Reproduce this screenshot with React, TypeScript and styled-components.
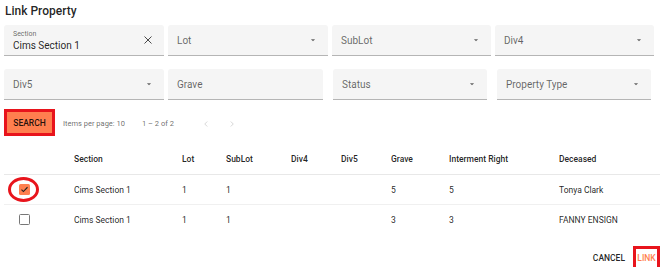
import styled, { createGlobalStyle } from 'styled-components';

interface PropertyRow {
    id: string;
    section: string;
    lot: string;
    subLot: string;
    div4: string;
    div5: string;
    grave: string;
    intermentRight: string;
    deceased: string;
    checked: boolean;
}

const rows: PropertyRow[] = [
    {
        id: 'r1',
        section: 'Cims Section 1',
        lot: '1',
        subLot: '1',
        div4: '',
        div5: '',
        grave: '5',
        intermentRight: '5',
        deceased: 'Tonya Clark',
        checked: true,
    },
    {
        id: 'r2',
        section: 'Cims Section 1',
        lot: '1',
        subLot: '1',
        div4: '',
        div5: '',
        grave: '3',
        intermentRight: '3',
        deceased: 'FANNY ENSIGN',
        checked: false,
    },
];

// column widths shared by header and body rows
const COLUMNS = '70px 108px 44px 65px 50px 50px 58px 110px 1fr';

const Caret = () => (
    <svg width="10" height="10" viewBox="0 0 24 24">
        <path d="M7 10l5 5 5-5z" fill="rgba(0,0,0,0.6)" />
    </svg>
);

const Chevron = ({ dir }: { dir: 'left' | 'right' }) => (
    <svg width="10" height="10" viewBox="0 0 24 24">
        <path
            d={dir === 'left' ? 'M15 6l-6 6 6 6' : 'M9 6l6 6-6 6'}
            fill="none"
            stroke="#cfcfcf"
            strokeWidth="2"
        />
    </svg>
);

function App() {
    return (
        <Page>
            <GlobalStyle />
            <Title>Link Property</Title>

            <FieldRow>
                <Field width={160}>
                    <FieldValue>
                        <FieldLabel>Section</FieldLabel>
                        <FieldText>Cims Section 1</FieldText>
                    </FieldValue>
                    <svg width="12" height="12" viewBox="0 0 24 24">
                        <path
                            d="M5 5l14 14M19 5L5 19"
                            stroke="rgba(0,0,0,0.7)"
                            strokeWidth="2"
                            fill="none"
                        />
                    </svg>
                </Field>
                <Field width={160}>
                    <Placeholder>Lot</Placeholder>
                    <Caret />
                </Field>
                <Field width={159}>
                    <Placeholder>SubLot</Placeholder>
                    <Caret />
                </Field>
                <Field width={159}>
                    <Placeholder>Div4</Placeholder>
                    <Caret />
                </Field>
            </FieldRow>

            <FieldRow second>
                <Field width={160}>
                    <Placeholder>Div5</Placeholder>
                    <Caret />
                </Field>
                <Field width={155} gapAfter={10}>
                    <Placeholder>Grave</Placeholder>
                </Field>
                <Field width={154} gapAfter={10}>
                    <Placeholder>Status</Placeholder>
                    <Caret />
                </Field>
                <Field width={154}>
                    <Placeholder>Property Type</Placeholder>
                    <Caret />
                </Field>
            </FieldRow>

            <Toolbar>
                <Highlight>
                    <SearchButton>SEARCH</SearchButton>
                </Highlight>
                <PagerText>Items per page: 10</PagerText>
                <PagerRange>1 – 2 of 2</PagerRange>
                <PagerNav>
                    <Chevron dir="left" />
                    <Chevron dir="right" />
                </PagerNav>
            </Toolbar>

            <Table>
                <HeaderRow>
                    <span />
                    <span>Section</span>
                    <span>Lot</span>
                    <span>SubLot</span>
                    <span>Div4</span>
                    <span>Div5</span>
                    <span>Grave</span>
                    <span>Interment Right</span>
                    <span>Deceased</span>
                </HeaderRow>
                {rows.map((row) => (
                    <BodyRow key={row.id}>
                        <CheckCell>
                            <Checkbox checked={row.checked}>
                                {row.checked && (
                                    <svg width="9" height="9" viewBox="0 0 24 24">
                                        <path
                                            d="M4 12.5l5 5L20 6"
                                            fill="none"
                                            stroke="#222"
                                            strokeWidth="3"
                                        />
                                    </svg>
                                )}
                            </Checkbox>
                            {row.checked && <Circle />}
                        </CheckCell>
                        <span>{row.section}</span>
                        <span>{row.lot}</span>
                        <span>{row.subLot}</span>
                        <span>{row.div4}</span>
                        <span>{row.div5}</span>
                        <span>{row.grave}</span>
                        <span>{row.intermentRight}</span>
                        <span>{row.deceased}</span>
                    </BodyRow>
                ))}
            </Table>

            <Footer>
                <CancelButton>CANCEL</CancelButton>
                <LinkBox>
                    <LinkButton>LINK</LinkButton>
                </LinkBox>
            </Footer>
        </Page>
    );
}

const GlobalStyle = createGlobalStyle`
    body {
        margin: 0;
        background: #ffffff;
        font-family: Roboto, 'Noto Sans', sans-serif;
        color: rgba(0, 0, 0, 0.87);
    }
`;

const Page = styled.div`
    width: 670px;
    height: 267px;
    padding: 0 10px 0 4px;
    box-sizing: border-box;
    overflow: hidden;
`;

const Title = styled.div`
    height: 25px;
    padding-left: 1px;
    font-size: 12px;
    font-weight: 500;
    line-height: 23px;
    color: rgba(0, 0, 0, 0.87);
`;

const FieldRow = styled.div<{ second?: boolean }>`
    display: flex;
    gap: 4px;
    margin-top: ${({ second }) => (second ? '13px' : '0')};
`;

const Field = styled.div<{ width: number; gapAfter?: number }>`
    flex: 0 0 ${({ width }) => width}px;
    margin-right: ${({ gapAfter }) => (gapAfter ? gapAfter - 4 : 0)}px;
    height: 31px;
    box-sizing: border-box;
    display: flex;
    align-items: center;
    justify-content: space-between;
    padding: 0 10px 0 9px;
    background: #f5f5f5;
    border-bottom: 1px solid #b5b5b5;
    border-radius: 3px 3px 0 0;
`;

const FieldValue = styled.div`
    display: flex;
    flex-direction: column;
    padding-top: 2px;
`;

const FieldLabel = styled.span`
    font-size: 7px;
    line-height: 9px;
    color: rgba(0, 0, 0, 0.6);
`;

const FieldText = styled.span`
    font-size: 10px;
    line-height: 13px;
    color: rgba(0, 0, 0, 0.87);
`;

const Placeholder = styled.span`
    font-size: 10px;
    color: rgba(0, 0, 0, 0.6);
`;

const Toolbar = styled.div`
    display: flex;
    align-items: center;
    margin-top: 9px;
    height: 27px;
`;

const Highlight = styled.div`
    border: 3px solid #e8141c;
    display: flex;
`;

const SearchButton = styled.button`
    width: 45px;
    height: 21px;
    border: none;
    padding: 0;
    background: #ff7f4f;
    font-family: Roboto, sans-serif;
    font-size: 8.5px;
    font-weight: 500;
    color: rgba(0, 0, 0, 0.87);
    cursor: pointer;
`;

const PagerText = styled.span`
    margin-left: 8px;
    font-size: 7.5px;
    color: rgba(0, 0, 0, 0.6);
    padding-top: 2px;
`;

const PagerRange = styled.span`
    margin-left: 17px;
    font-size: 7.5px;
    color: rgba(0, 0, 0, 0.6);
    padding-top: 2px;
`;

const PagerNav = styled.div`
    display: flex;
    gap: 16px;
    margin-left: 27px;
    padding-top: 2px;
`;

const Table = styled.div`
    margin-top: 8px;
`;

const HeaderRow = styled.div`
    display: grid;
    grid-template-columns: ${COLUMNS};
    align-items: center;
    height: 30px;
    border-bottom: 1px solid #e8e8e8;
    font-size: 8.5px;
    font-weight: 500;
    color: rgba(0, 0, 0, 0.87);
`;

const BodyRow = styled.div`
    display: grid;
    grid-template-columns: ${COLUMNS};
    align-items: center;
    height: 29px;
    border-bottom: 1px solid #f0f0f0;
    font-size: 8.5px;
    color: rgba(0, 0, 0, 0.87);

    &:last-child {
        border-bottom: none;
    }
`;

const CheckCell = styled.div`
    position: relative;
    height: 100%;
    display: flex;
    align-items: center;
    padding-left: 15px;
`;

const Checkbox = styled.div<{ checked: boolean }>`
    width: 11px;
    height: 11px;
    box-sizing: border-box;
    border-radius: 1.5px;
    display: flex;
    align-items: center;
    justify-content: center;
    background: ${({ checked }) => (checked ? '#ff7f4f' : '#fff')};
    border: ${({ checked }) => (checked ? 'none' : '1.5px solid #777')};
`;

// red annotation ring around the selected checkbox
const Circle = styled.div`
    position: absolute;
    left: 4px;
    top: 2px;
    width: 31px;
    height: 25px;
    box-sizing: border-box;
    border: 3px solid #e8141c;
    border-radius: 50%;
`;

const Footer = styled.div`
    display: flex;
    justify-content: flex-end;
    align-items: center;
    margin-top: 12px;
    padding-right: 0;
    gap: 8px;
`;

const CancelButton = styled.button`
    border: none;
    background: none;
    padding: 0;
    font-family: Roboto, sans-serif;
    font-size: 8.5px;
    font-weight: 500;
    color: rgba(0, 0, 0, 0.87);
`;

const LinkBox = styled.div`
    border: 3px solid #e8141c;
    width: 27px;
    height: 24px;
    box-sizing: border-box;
    display: flex;
    align-items: center;
    justify-content: center;
`;

const LinkButton = styled.button`
    border: none;
    background: none;
    padding: 0;
    font-family: Roboto, sans-serif;
    font-size: 8.5px;
    font-weight: 500;
    color: #ff7f4f;
`;

export default App;
